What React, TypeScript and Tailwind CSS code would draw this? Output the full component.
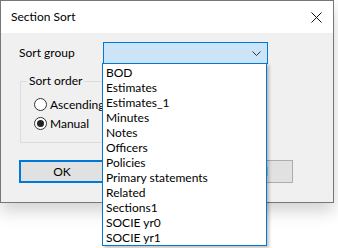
const items = [
  "BOD",
  "Estimates",
  "Estimates_1",
  "Minutes",
  "Notes",
  "Officers",
  "Policies",
  "Primary statements",
  "Related",
  "Sections1",
  "SOCIE yr0",
  "SOCIE yr1",
];

function Radio({ label, checked }: { label: string; checked?: boolean }) {
  return (
    <label className="flex items-center gap-[3px] h-[19px]">
      <span className="w-[13px] h-[13px] rounded-full border border-[#333] bg-white flex items-center justify-center">
        {checked && <span className="w-[7px] h-[7px] rounded-full bg-[#222]" />}
      </span>
      <span>{label}</span>
    </label>
  );
}

export default function App() {
  return (
    <div
      className="relative w-[338px] h-[248px] bg-white text-[12px] text-black overflow-hidden"
      style={{ fontFamily: 'Lato, "Liberation Sans", sans-serif' }}
    >
      <div className="w-[334px] h-[203px] border border-[#777] bg-[#f0f0f0] shadow-[0_8px_16px_rgba(0,0,0,0.18)] flex flex-col">
        <div className="h-[32px] bg-white flex items-center justify-between pl-[10px] pr-[10px]">
          <span>Section Sort</span>
          <svg width="11" height="11" viewBox="0 0 11 11" className="mr-[1px]">
            <path d="M0.5 0.5 L10.5 10.5 M10.5 0.5 L0.5 10.5" stroke="#111" strokeWidth="1" />
          </svg>
        </div>
        <div className="flex flex-col pl-[18px] pt-[9px]">
          <div className="flex items-center h-[22px]">
            <span className="w-[84px]">Sort group</span>
            <div className="w-[165px] h-[22px] border border-[#0078d7] bg-[#cce4f7] flex items-center justify-end pr-[6px]">
              <svg width="9" height="5" viewBox="0 0 9 5">
                <path d="M0.5 0.5 L4.5 4.5 L8.5 0.5" stroke="#333" strokeWidth="1" fill="none" />
              </svg>
            </div>
          </div>
          <fieldset className="mt-[10px] ml-[1px] w-[232px] h-[69px] border border-[#dcdcdc]">
            <legend className="px-[2px] ml-[6px] leading-[14px]">Sort order</legend>
            <div className="pl-[13px] pt-[7px]">
              <Radio label="Ascending" />
              <Radio label="Manual" checked />
            </div>
          </fieldset>
          <div className="flex mt-[17px] gap-[102px]">
            <div className="w-[86px] h-[23px] border-2 border-[#0078d7] bg-[#e1e1e1] flex items-center justify-center">
              OK
            </div>
            <div className="w-[86px] h-[23px] border border-[#adadad] bg-[#e1e1e1] flex items-center justify-center">
              Cancel
            </div>
          </div>
        </div>
      </div>
      <div className="absolute left-[102px] top-[63px] w-[165px] border border-[#0078d7] bg-white shadow-[2px_2px_3px_rgba(0,0,0,0.25)] pl-[3px] pt-[1px]">
        {items.map((it) => (
          <div key={it} className="h-[15px] leading-[15px]">
            {it}
          </div>
        ))}
      </div>
    </div>
  );
}
